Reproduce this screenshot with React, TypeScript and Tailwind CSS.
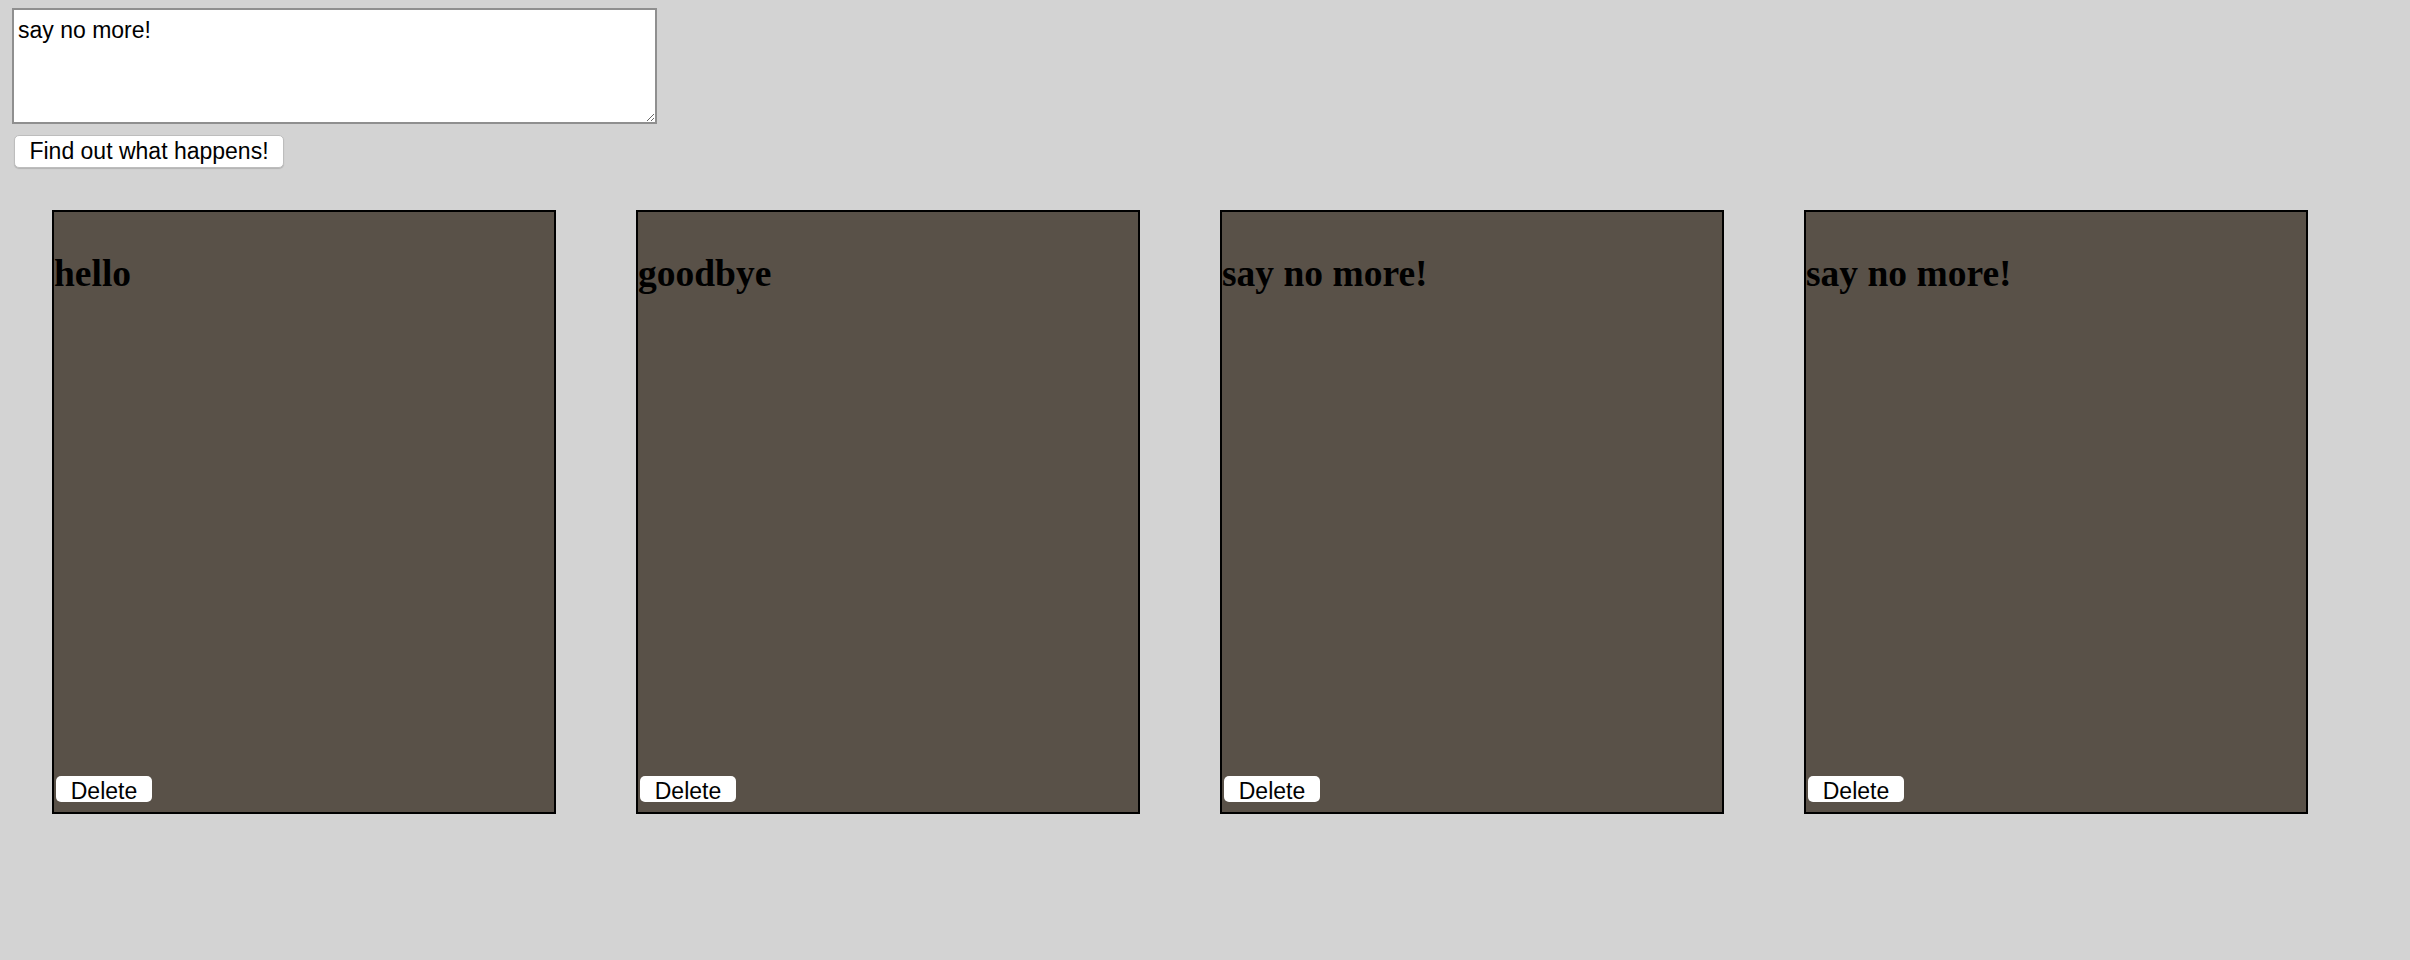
import React from "react";

const notes = ["hello", "goodbye", "say no more!", "say no more!"];

export default function App() {
  return (
    <div className="min-h-screen w-full bg-[#d3d3d3] pl-[12px] pt-[8px] font-['Liberation_Sans',Arial,sans-serif] text-black">
      <textarea
        defaultValue="say no more!"
        className="block h-[116px] w-[645px] border-2 border-[#8f8f8f] bg-white px-[4px] pt-[3px] text-[23px] leading-normal text-black outline-none"
      />
      <button className="mt-[11px] ml-[2px] block h-[33px] w-[270px] rounded-[5px] border border-[#bdbdbd] bg-white text-center text-[23px] leading-[31px] text-black shadow-[0_1px_1px_rgba(0,0,0,0.15)]">
        Find out what happens!
      </button>
      <div className="mt-[42px] flex">
        {notes.map((n, i) => (
          <div
            key={i}
            className="mx-[40px] flex h-[604px] w-[504px] shrink-0 flex-col border-2 border-black bg-[#595148]"
          >
            <h2 className="mt-[41px] font-['Liberation_Serif','Times_New_Roman',serif] text-[37.5px] font-bold leading-[41px] text-black">
              {n}
            </h2>
            <button className="mt-auto mb-[10px] ml-[2px] h-[26px] w-[96px] rounded-[5px] bg-white pt-[3px] text-center text-[23px] leading-[22px] text-black">
              Delete
            </button>
          </div>
        ))}
      </div>
    </div>
  );
}
